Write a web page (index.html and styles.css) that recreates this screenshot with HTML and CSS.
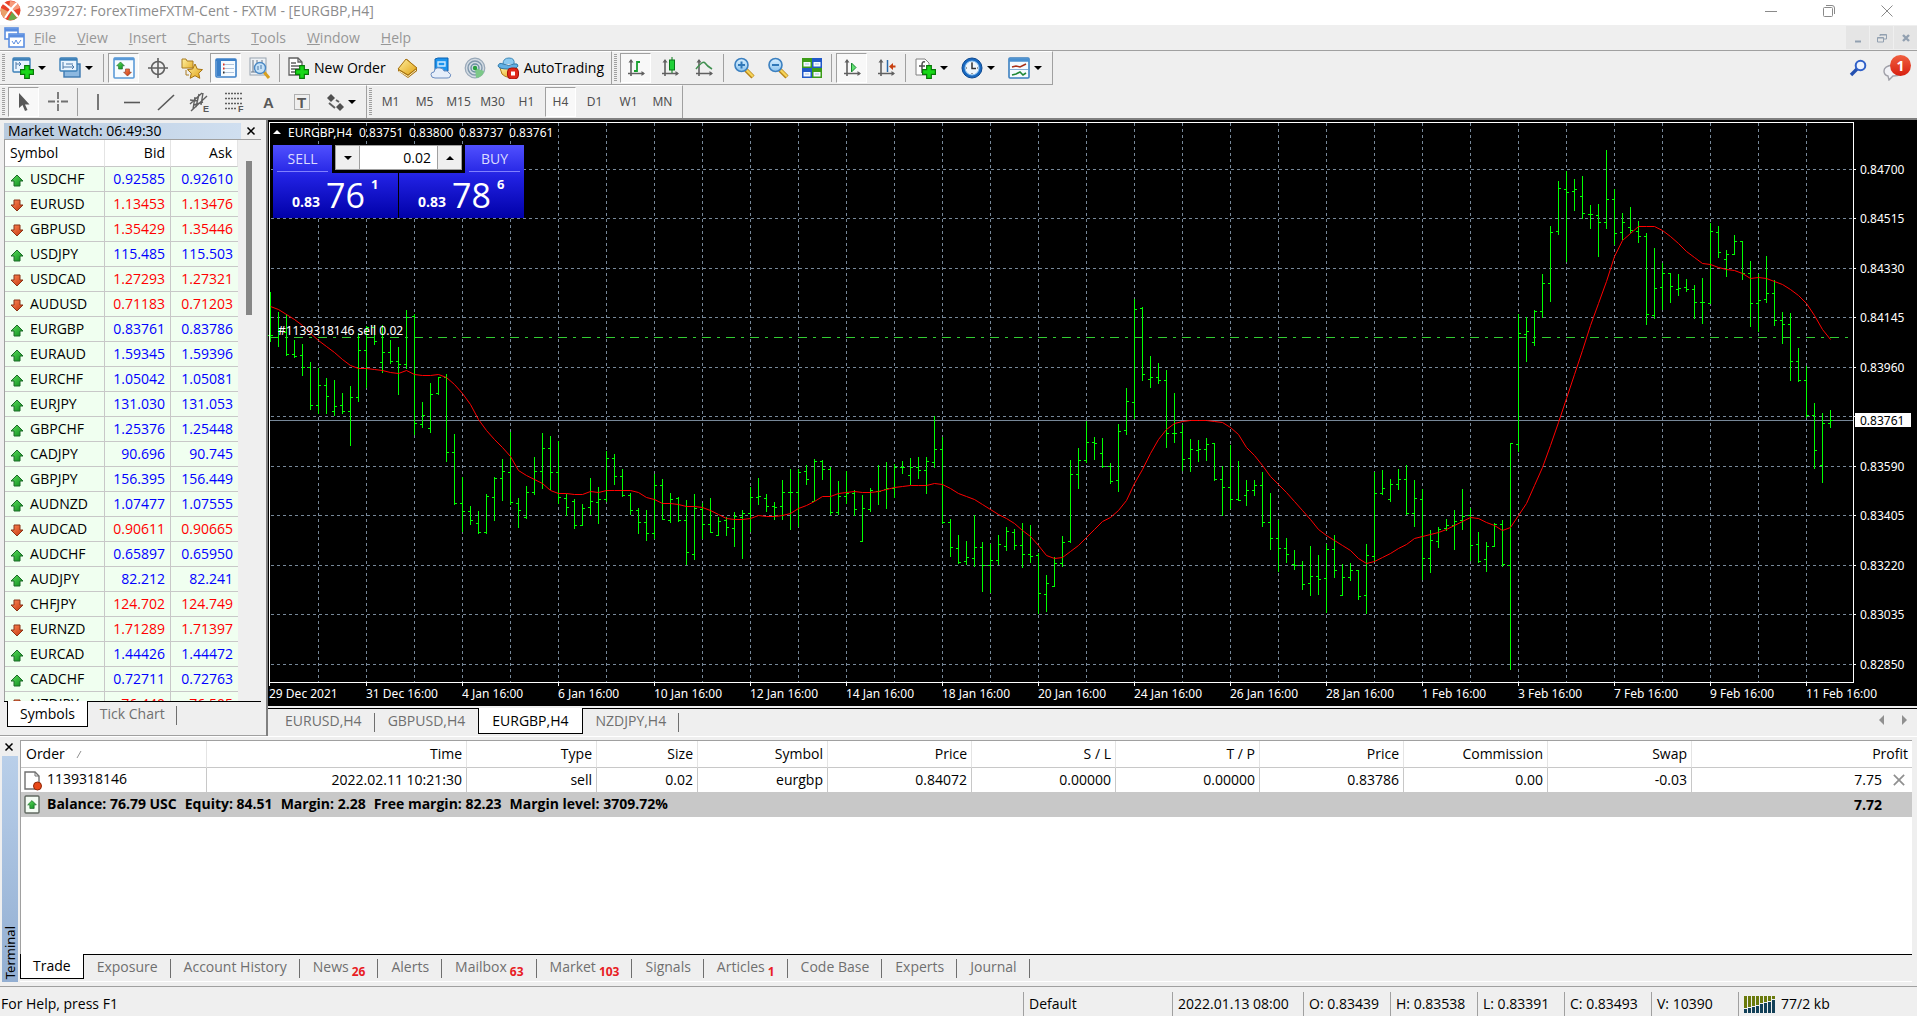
FILE: index.html
```html
<!DOCTYPE html>
<html lang="en">
<head>
<meta charset="utf-8">
<title>2939727: ForexTimeFXTM-Cent - FXTM - [EURGBP,H4]</title>
<link rel="stylesheet" href="styles.css">
</head>
<body>
<svg class="defs" aria-hidden="true">
  <defs>
    <linearGradient id="gGreen" x1="0" y1="0" x2="1" y2="1"><stop offset="0" stop-color="#5fe05f"/><stop offset="1" stop-color="#0a8a1a"/></linearGradient>
    <linearGradient id="gRed" x1="0" y1="0" x2="1" y2="1"><stop offset="0" stop-color="#ff8a5a"/><stop offset="1" stop-color="#c23208"/></linearGradient>
    <linearGradient id="gGold" x1="0" y1="0" x2="1" y2="1"><stop offset="0" stop-color="#fff0a0"/><stop offset="1" stop-color="#e0a010"/></linearGradient>
    <linearGradient id="gBlue" x1="0" y1="0" x2="0" y2="1"><stop offset="0" stop-color="#d8efff"/><stop offset="1" stop-color="#8cc4ee"/></linearGradient>
    <symbol id="up" viewBox="0 0 14 13"><path d="M7 1 13 7H10V12H4V7H1Z" fill="url(#gGreen)" stroke="#1c6a28"/></symbol>
    <symbol id="down" viewBox="0 0 14 13"><path d="M7 12 1 6H4V1H10V6H13Z" fill="url(#gRed)" stroke="#8a3418"/></symbol>
    <symbol id="plus" viewBox="0 0 12 12"><path d="M4 .5H8V4H11.500V8H8V11.500H4V8H.5V4H4Z" fill="#18d818" stroke="#087808"/></symbol>
    <symbol id="axes" viewBox="0 0 18 20"><path d="M4 2V18M1 15.500H17" fill="none" stroke="#606060" stroke-width="1.600"/><path d="M1.500 4.500 4 1 6.500 4.500ZM14.500 13 18 15.500 14.500 18Z" fill="#606060"/></symbol>
    <symbol id="lens" viewBox="0 0 22 22"><path d="M13 13 20 20" stroke="#b88418" stroke-width="4.500"/><path d="M13.500 13 20 19.500" stroke="#f6d45a" stroke-width="2.400"/><circle cx="8.500" cy="8" r="6.500" fill="url(#gBlue)" stroke="#3c80c0" stroke-width="1.600"/></symbol>
  </defs>
</svg>

<header class="titlebar">
  <svg class="logo" viewBox="0 0 21 21"><circle cx="10.500" cy="10.500" r="10" fill="#e8432a"/><path d="M10 1Q18 1 20 8L12 11 9 9Z" fill="#f79a7a"/><path d="M1 8 9 12 4 18Q0 14 1 8Z" fill="#e9a06a"/><path d="M8 20 12 12 17 18Q13 21 8 20Z" fill="#6aa84a"/><path d="M3 3Q9 6 18 17M17 3Q12 7 5 18" fill="none" stroke="#fff" stroke-width="2.200"/></svg>
  <span class="title-text">2939727: ForexTimeFXTM-Cent - FXTM - [EURGBP,H4]</span>
  <div class="window-controls">
    <button type="button" aria-label="Minimize"><svg viewBox="0 0 14 14"><path d="M1 7.500H13"/></svg></button>
    <button type="button" aria-label="Restore"><svg viewBox="0 0 14 14"><rect x="1.500" y="3.500" width="9" height="9" rx="1"/><path d="M4 1.500H10Q12.500 1.500 12.500 4V10"/></svg></button>
    <button type="button" aria-label="Close"><svg viewBox="0 0 14 14"><path d="M1.500 1.500 12.500 12.500M12.500 1.500 1.500 12.500"/></svg></button>
  </div>
</header>

<nav class="menubar">
  <svg class="menu-logo" viewBox="0 0 21 21"><rect x="1" y="1" width="13" height="11" fill="#fff" stroke="#5b8ee0" stroke-width="1.600"/><path d="M1 3H14" stroke="#5b8ee0" stroke-width="3"/><rect x="5" y="7" width="15" height="13" fill="#fff" stroke="#5b8ee0" stroke-width="1.600"/><path d="M5 9H20" stroke="#5b8ee0" stroke-width="3"/><path d="M8 14 10 17 12 13 14 17 17 13" fill="none" stroke="#5b8ee0"/></svg>
  <button type="button"><u>F</u>ile</button>
  <button type="button"><u>V</u>iew</button>
  <button type="button"><u>I</u>nsert</button>
  <button type="button"><u>C</u>harts</button>
  <button type="button"><u>T</u>ools</button>
  <button type="button"><u>W</u>indow</button>
  <button type="button"><u>H</u>elp</button>
  <div class="mdi-controls">
    <button type="button" aria-label="Minimize chart"><svg viewBox="0 0 10 10"><path d="M2 8.500H8" stroke-width="2"/></svg></button>
    <button type="button" aria-label="Restore chart"><svg viewBox="0 0 10 10"><path d="M3 3V1.500H9.500V6H7M.5 4.500H6.500V9H.5ZM.5 5H6.500M3 2H9.500"/></svg></button>
    <button type="button" aria-label="Close chart"><svg viewBox="0 0 10 10"><path d="M2 2 8 8M8 2 2 8" stroke-width="2.400"/></svg></button>
  </div>
</nav>

<div class="toolbars">
  <div class="toolbar-row">
    <div class="toolbar">
      <span class="grip"></span>
      <button type="button" class="tool drop" aria-label="New chart"><svg viewBox="0 0 22 22"><rect x="1" y="1" width="17" height="14" rx="1" fill="#e8f4fe" stroke="#3c80b8" stroke-width="1.400"/><path d="M1 2.500H18" stroke="#3c80b8" stroke-width="2.500"/><path d="M4 5V12M4 7H9M7 5 9 7 7 9" fill="none" stroke="#4a78a8"/><use href="#plus" x="8" y="8" width="14" height="14"/></svg></button>
      <button type="button" class="tool drop" aria-label="Profiles"><svg viewBox="0 0 22 22"><rect x="5" y="7" width="16" height="13" fill="#8cb8e0" stroke="#3c78b0" stroke-width="1.400"/><rect x="1" y="1" width="17" height="13" rx="1" fill="#e8f4fe" stroke="#3c80b8" stroke-width="1.400"/><path d="M1 2.500H18" stroke="#3c80b8" stroke-width="2.500"/><path d="M4 5V12M4 10H15M13 8 15 10 13 12M7 7H14" fill="none" stroke="#4a78a8"/></svg></button>
      <span class="sep"></span>
      <button type="button" class="tool pressed" aria-label="Market Watch"><svg viewBox="0 0 22 22"><rect x="1" y="1" width="20" height="20" rx="1" fill="#f6fbff" stroke="#5a9ad8" stroke-width="1.600"/><path d="M1 2H21" stroke="#5a9ad8" stroke-width="2.500"/><use href="#up" x="3" y="4" width="9" height="9"/><use href="#down" x="10" y="11" width="9" height="9"/></svg></button>
      <button type="button" class="tool" aria-label="Data Window"><svg viewBox="0 0 22 22" fill="none" stroke="#606060" stroke-width="1.600"><circle cx="11" cy="11" r="6.500"/><path d="M11 1V21M1 11H21"/></svg></button>
      <button type="button" class="tool" aria-label="Navigator"><svg viewBox="0 0 22 22"><path d="M1 2H5L6 4H12V11H1ZM5 13V18M5 18H8" fill="url(#gGold)" stroke="#a87a20"/><path d="M14 7 16.300 12 21.500 12.600 17.700 16.200 18.800 21.300 14 18.700 9.200 21.300 10.300 16.200 6.500 12.600 11.700 12Z" fill="url(#gGold)" stroke="#a87410"/></svg></button>
      <button type="button" class="tool pressed" aria-label="Terminal"><svg viewBox="0 0 22 22"><rect x="1" y="2" width="20" height="18" rx="1" fill="#f6fbff" stroke="#3c80c8" stroke-width="1.600"/><path d="M1 3H21" stroke="#3c80c8" stroke-width="2"/><rect x="2" y="4" width="4" height="15" fill="#3c80c8"/><path d="M9 7.500H19M9 11.500H19M9 15.500H19" stroke="#b0c4dc"/><path d="M8 7.500H9.500M8 11.500H9.500" stroke="#e03020" stroke-width="2"/><path d="M8 15.500H9.500" stroke="#303030" stroke-width="2"/></svg></button>
      <button type="button" class="tool" aria-label="Strategy Tester"><svg viewBox="0 0 22 22"><rect x="1" y="1" width="16" height="17" fill="#eef2f6" stroke="#98a4b0"/><path d="M4 3V15M8 3V8M13 3V8M2 15H16" stroke="#68788a"/><path d="M15 15 20 21" stroke="#d8a020" stroke-width="3"/><circle cx="11" cy="11" r="5.500" fill="#c6e2f8" stroke="#4a88c4" stroke-width="1.400"/><path d="M9 9V13M12 8V12" stroke="#4a78a8"/></svg></button>
      <span class="sep"></span>
      <button type="button" class="tool label"><svg viewBox="0 0 22 22"><path d="M2 1H11L15 5V18H2Z" fill="#fff" stroke="#606060" stroke-width="1.300"/><path d="M4 6H9M4 9H12M4 12H12M4 15H8M11 1V5H15" fill="none" stroke="#606060" stroke-width="1.300"/><use href="#plus" x="8" y="8" width="14" height="14"/></svg>New Order</button>
      <button type="button" class="tool" aria-label="MetaEditor"><svg viewBox="0 0 22 22"><path d="M2 12 11 2 21 11V14L12 21 2 14Z" fill="#a87010"/><path d="M2 12 10 2 21 11 12 18Z" fill="url(#gGold)" stroke="#a87410"/><path d="M3 14 12 19.500 20 13" fill="none" stroke="#fff4c0"/></svg></button>
      <button type="button" class="tool" aria-label="Signals service"><svg viewBox="0 0 22 22"><path d="M5 2 8 1H18V14H5Z" fill="#1c94ee" stroke="#0a60b0"/><path d="M8 5H15V9H8Z" fill="none" stroke="#cfeaff" stroke-width="1.400"/><path d="M5 21Q1 21 1 17.500 1 15 4 15 5 10 10 11 13 11 14 14 18 13 19 16 22 17 20 20 19 21 17 21Z" fill="#e6eefa" stroke="#6a8cc0"/></svg></button>
      <button type="button" class="tool" aria-label="Options"><svg viewBox="0 0 22 22" fill="none"><circle cx="11" cy="11" r="9.800" fill="#d4dce4" stroke="#98a8b8" stroke-width="1.200"/><circle cx="11" cy="11" r="7" stroke="#8098ac" stroke-width="1.400"/><circle cx="11" cy="11" r="4" stroke="#6a90a0" stroke-width="1.400"/><path d="M11 11 12 21Q19 20 20 14Z" fill="#7cc888"/><circle cx="11" cy="11" r="2.200" fill="#28a040"/></svg></button>
      <button type="button" class="tool label"><svg viewBox="0 0 22 22"><path d="M3 11H20L18 18Q11 23 5 17Z" fill="url(#gGold)" stroke="#b07a18"/><path d="M6 7Q6 1 12 1T17 7" fill="#8ccaf0" stroke="#3c88b8"/><path d="M1 9Q2 5 6 7 12 10 17 7 21 6 21 9 20 12 11 12 2 12 1 9Z" fill="#60b0e4" stroke="#3078a8"/><rect x="10.500" y="11" width="11" height="11" rx="4" fill="#e02818" stroke="#a81008"/><rect x="14" y="14.500" width="4" height="4" fill="#fff"/></svg>AutoTrading</button>
    </div>
    <div class="toolbar">
      <span class="grip"></span>
      <button type="button" class="tool pressed" aria-label="Bar chart"><svg viewBox="0 0 22 22"><use href="#axes" x="2" y="1" width="18" height="20"/><path d="M12 4V15M12 5H15M9 14H12" fill="none" stroke="#18a030" stroke-width="1.800"/></svg></button>
      <button type="button" class="tool" aria-label="Candlesticks"><svg viewBox="0 0 22 22"><use href="#axes" x="2" y="1" width="18" height="20"/><path d="M13 0V16" stroke="#087818"/><rect x="10.500" y="3" width="5" height="10" fill="#20d038" stroke="#087818"/></svg></button>
      <button type="button" class="tool" aria-label="Line chart"><svg viewBox="0 0 22 22"><use href="#axes" x="2" y="1" width="18" height="20"/><path d="M3 12Q10 3 12 6T19 12" fill="none" stroke="#409050" stroke-width="1.500"/></svg></button>
      <span class="sep"></span>
      <button type="button" class="tool" aria-label="Zoom in"><svg viewBox="0 0 22 22"><use href="#lens" width="22" height="22"/><path d="M5 8H12M8.500 4.500V11.500" stroke="#3078b8" stroke-width="2"/></svg></button>
      <button type="button" class="tool" aria-label="Zoom out"><svg viewBox="0 0 22 22"><use href="#lens" width="22" height="22"/><path d="M5 8H12" stroke="#3078b8" stroke-width="2"/></svg></button>
      <button type="button" class="tool" aria-label="Tile windows"><svg viewBox="0 0 22 22"><path d="M1 1H11V11H1ZM11 11H21V21H11Z" fill="#3c9c18"/><path d="M11 1H21V11H11ZM1 11H11V21H1Z" fill="#2058c8"/><path d="M2.500 5H9.500V9.500H2.500ZM12.500 5H19.500V9.500H12.500ZM2.500 15H9.500V19.500H2.500ZM12.500 15H19.500V19.500H12.500Z" fill="#f4f8ff"/><path d="M4 7H8M14 7H18M4 17H8M14 17H18" stroke="#a8c4e0"/></svg></button>
      <span class="sep"></span>
      <button type="button" class="tool pressed" aria-label="Auto scroll"><svg viewBox="0 0 22 22"><use href="#axes" x="2" y="1" width="18" height="20"/><path d="M10.500 6 15 10.500 10.500 15Z" fill="#60e070" stroke="#188830"/></svg></button>
      <button type="button" class="tool" aria-label="Chart shift"><svg viewBox="0 0 22 22"><use href="#axes" x="2" y="1" width="18" height="20"/><path d="M12.500 3V15" stroke="#2868a8" stroke-width="1.500"/><path d="M14 9.500 18 6V8.500H20.500V10.500H18V13Z" fill="#c84010"/></svg></button>
      <span class="sep"></span>
      <button type="button" class="tool drop" aria-label="Indicators"><svg viewBox="0 0 22 22"><path d="M2 2H11L15 6V18H2Z" fill="#fff" stroke="#808080"/><path d="M11 5Q8 4 8 8V16M5 9H11" fill="none" stroke="#505050" stroke-width="1.500"/><use href="#plus" x="8" y="8" width="14" height="14"/></svg></button>
      <button type="button" class="tool drop" aria-label="Periods"><svg viewBox="0 0 22 22"><circle cx="11" cy="11" r="10" fill="#1868c0" stroke="#0c4890"/><circle cx="11" cy="11" r="7" fill="#eef5fb" stroke="#88c0f0"/><path d="M11 6V11.500H15" fill="none" stroke="#303030" stroke-width="1.500"/><path d="M11 5V6M11 16V17M5 11H6M16 11H17" stroke="#404040"/></svg></button>
      <button type="button" class="tool drop" aria-label="Templates"><svg viewBox="0 0 22 22"><rect x="1" y="1" width="20" height="20" rx="1" fill="#f6fbff" stroke="#3c80c0" stroke-width="1.600"/><path d="M1 3H21" stroke="#4a90d0" stroke-width="3.500"/><path d="M4 10 8 9 12 10 18 7" fill="none" stroke="#a83018" stroke-width="1.600"/><path d="M2 12.500H20" stroke="#88b0d8"/><path d="M4 18 8 17 12 15 15 18 18 16" fill="none" stroke="#208838" stroke-width="1.600"/></svg></button>
    </div>
    <div class="status-tools">
      <button type="button" aria-label="Search"><svg class="search" viewBox="0 0 18 18"><path d="M8 10 2 16" stroke="#2450b0" stroke-width="3.400"/><circle cx="11.500" cy="6.500" r="4.800" fill="#eef4ff" stroke="#3060c8" stroke-width="2"/></svg></button>
      <button type="button" class="chat" aria-label="Messages"><svg viewBox="0 0 22 18"><path d="M10 2Q1 3 1 8 1 12 5 13L6 17 10 13Q20 13 20 8 19 2 10 2Z" fill="#f2f2f6" stroke="#a0a0a8" stroke-width="1.400"/></svg><span class="badge">1</span></button>
    </div>
  </div>
  <div class="toolbar-row">
    <div class="toolbar">
      <span class="grip"></span>
      <button type="button" class="tool pressed" aria-label="Cursor"><svg viewBox="0 0 22 22"><path d="M6 2V17L9.500 14 12 20 14.500 19 12 13.500H16.500Z" fill="#585858"/></svg></button>
      <button type="button" class="tool" aria-label="Crosshair"><svg viewBox="0 0 22 22"><path d="M11 1V8M11 13V20M1 10.500H8M14 10.500H21M10 10.500H12" stroke="#707070" stroke-width="1.800"/></svg></button>
      <span class="sep"></span>
      <button type="button" class="tool" aria-label="Vertical line"><svg viewBox="0 0 22 22"><path d="M11 3V19" stroke="#585858" stroke-width="1.600"/></svg></button>
      <button type="button" class="tool" aria-label="Horizontal line"><svg viewBox="0 0 22 22"><path d="M3 11.500H19" stroke="#585858" stroke-width="1.600"/></svg></button>
      <button type="button" class="tool" aria-label="Trendline"><svg viewBox="0 0 22 22"><path d="M3 19 19 4" stroke="#585858" stroke-width="1.600"/></svg></button>
      <button type="button" class="tool" aria-label="Equidistant channel"><svg viewBox="0 0 22 22"><path d="M1 13 13 2M2 20 18 5M6 6 4 18M10 3 7 16M14 2 12 14M1 9 9 10M5 14 14 11" fill="none" stroke="#606060" stroke-width="1.400"/><text x="14" y="21" class="glyph small">E</text></svg></button>
      <button type="button" class="tool" aria-label="Fibonacci"><svg viewBox="0 0 22 22"><path d="M2 2.500H20M2 7.500H20M2 12.500H20M2 17.500H14" stroke="#606060" stroke-width="1.500" stroke-dasharray="2 1"/><text x="15" y="21" class="glyph small">F</text></svg></button>
      <button type="button" class="tool" aria-label="Text"><svg viewBox="0 0 22 22"><text x="6" y="17" class="glyph">A</text></svg></button>
      <button type="button" class="tool" aria-label="Text label"><svg viewBox="0 0 22 22"><rect x="3.500" y="3.500" width="15" height="15" fill="none" stroke="#707070" stroke-dasharray="1 1"/><text x="6" y="17" class="glyph">T</text></svg></button>
      <button type="button" class="tool drop arrows" aria-label="Arrows"><svg viewBox="0 0 22 22"><path d="M7 3 11 7 7 11 3 7ZM16 12 20 16 16 20 12 16Z" fill="#505050"/><path d="M5 12 11 17M12 9 15 11" stroke="#606060" stroke-width="2"/></svg></button>
    </div>
    <div class="toolbar periods">
      <span class="grip"></span>
      <button type="button" class="tool">M1</button>
      <button type="button" class="tool">M5</button>
      <button type="button" class="tool">M15</button>
      <button type="button" class="tool">M30</button>
      <button type="button" class="tool">H1</button>
      <button type="button" class="tool pressed">H4</button>
      <button type="button" class="tool">D1</button>
      <button type="button" class="tool">W1</button>
      <button type="button" class="tool">MN</button>
    </div>
  </div>
</div>

<main class="workspace">
  <section class="market-watch">
    <div class="panel-title"><span class="panel-name">Market Watch: 06:49:30</span><button type="button" class="close" aria-label="Close Market Watch"><svg viewBox="0 0 10 10"><path d="M1.500 1.500 8.500 8.500M8.500 1.500 1.500 8.500"/></svg></button></div>
    <div class="quotes">
      <table>
        <thead><tr><th>Symbol</th><th>Bid</th><th>Ask</th></tr></thead>
        <tbody>
          <tr class="rise"><td><svg><use href="#up"/></svg>USDCHF</td><td>0.92585</td><td>0.92610</td></tr>
          <tr class="fall"><td><svg><use href="#down"/></svg>EURUSD</td><td>1.13453</td><td>1.13476</td></tr>
          <tr class="fall"><td><svg><use href="#down"/></svg>GBPUSD</td><td>1.35429</td><td>1.35446</td></tr>
          <tr class="rise"><td><svg><use href="#up"/></svg>USDJPY</td><td>115.485</td><td>115.503</td></tr>
          <tr class="fall"><td><svg><use href="#down"/></svg>USDCAD</td><td>1.27293</td><td>1.27321</td></tr>
          <tr class="fall"><td><svg><use href="#down"/></svg>AUDUSD</td><td>0.71183</td><td>0.71203</td></tr>
          <tr class="rise"><td><svg><use href="#up"/></svg>EURGBP</td><td>0.83761</td><td>0.83786</td></tr>
          <tr class="rise"><td><svg><use href="#up"/></svg>EURAUD</td><td>1.59345</td><td>1.59396</td></tr>
          <tr class="rise"><td><svg><use href="#up"/></svg>EURCHF</td><td>1.05042</td><td>1.05081</td></tr>
          <tr class="rise"><td><svg><use href="#up"/></svg>EURJPY</td><td>131.030</td><td>131.053</td></tr>
          <tr class="rise"><td><svg><use href="#up"/></svg>GBPCHF</td><td>1.25376</td><td>1.25448</td></tr>
          <tr class="rise"><td><svg><use href="#up"/></svg>CADJPY</td><td>90.696</td><td>90.745</td></tr>
          <tr class="rise"><td><svg><use href="#up"/></svg>GBPJPY</td><td>156.395</td><td>156.449</td></tr>
          <tr class="rise"><td><svg><use href="#up"/></svg>AUDNZD</td><td>1.07477</td><td>1.07555</td></tr>
          <tr class="fall"><td><svg><use href="#down"/></svg>AUDCAD</td><td>0.90611</td><td>0.90665</td></tr>
          <tr class="rise"><td><svg><use href="#up"/></svg>AUDCHF</td><td>0.65897</td><td>0.65950</td></tr>
          <tr class="rise"><td><svg><use href="#up"/></svg>AUDJPY</td><td>82.212</td><td>82.241</td></tr>
          <tr class="fall"><td><svg><use href="#down"/></svg>CHFJPY</td><td>124.702</td><td>124.749</td></tr>
          <tr class="fall"><td><svg><use href="#down"/></svg>EURNZD</td><td>1.71289</td><td>1.71397</td></tr>
          <tr class="rise"><td><svg><use href="#up"/></svg>EURCAD</td><td>1.44426</td><td>1.44472</td></tr>
          <tr class="rise"><td><svg><use href="#up"/></svg>CADCHF</td><td>0.72711</td><td>0.72763</td></tr>
          <tr class="fall"><td><svg><use href="#down"/></svg>NZDJPY</td><td>76.440</td><td>76.505</td></tr>
        </tbody>
      </table>
      <div class="scrollbar"><div class="thumb"></div></div>
    </div>
    <div class="tabs"><button type="button" class="tab active">Symbols</button><button type="button" class="tab">Tick Chart</button></div>
  </section>

  <section class="chart-window">
    <div class="chart" id="chart">
      <svg id="plot" role="img" aria-label="EURGBP H4 bar chart"></svg>
      <div class="trade-panel">
        <button type="button" class="sell"><span class="side">SELL</span><span class="quote"><b>0.83</b><span class="big">76</span><sup>1</sup></span></button>
        <button type="button" class="buy"><span class="side">BUY</span><span class="quote"><b>0.83</b><span class="big">78</span><sup>6</sup></span></button>
        <div class="volume">
          <button type="button" aria-label="Decrease volume"><svg viewBox="0 0 8 4"><path d="M0 0H8L4 4Z"/></svg></button>
          <input type="text" value="0.02" aria-label="Volume">
          <button type="button" aria-label="Increase volume"><svg viewBox="0 0 8 4"><path d="M0 4H8L4 0Z"/></svg></button>
        </div>
      </div>
    </div>
    <div class="tabs chart-tabs">
      <button type="button" class="tab">EURUSD,H4</button><button type="button" class="tab before">GBPUSD,H4</button><button type="button" class="tab active">EURGBP,H4</button><button type="button" class="tab">NZDJPY,H4</button>
      <div class="tab-scroll"><button type="button" aria-label="Previous tabs"><svg viewBox="0 0 5 10"><path d="M5 0V10L0 5Z"/></svg></button><button type="button" aria-label="Next tabs"><svg viewBox="0 0 5 10"><path d="M0 0V10L5 5Z"/></svg></button></div>
    </div>
  </section>
</main>

<section class="terminal">
  <div class="terminal-side"><button type="button" class="close" aria-label="Close Terminal"><svg viewBox="0 0 10 10"><path d="M1.500 1.500 8.500 8.500M8.500 1.500 1.500 8.500"/></svg></button><div class="side-title"><span>Terminal</span></div></div>
  <div class="terminal-main">
    <div class="orders">
      <table>
        <colgroup><col class="c-order"><col class="c-time"><col class="c-type"><col class="c-size"><col class="c-type"><col class="c-num"><col class="c-num"><col class="c-num"><col class="c-num"><col class="c-num"><col class="c-num"><col></colgroup>
        <thead><tr><th>Order<svg class="sort" viewBox="0 0 6 9"><path d="M1 8 5 1" /></svg></th><th>Time</th><th>Type</th><th>Size</th><th>Symbol</th><th>Price</th><th>S / L</th><th>T / P</th><th>Price</th><th>Commission</th><th>Swap</th><th>Profit</th></tr></thead>
        <tbody>
          <tr><td><svg class="row-icon" viewBox="0 0 18 20"><path d="M1 1H11L15 5V18H1Z" fill="#fff" stroke="#707070" stroke-width="1.400"/><path d="M11 1V5H15" fill="none" stroke="#707070"/><circle cx="13.500" cy="15" r="4" fill="#e84818" stroke="#902808"/></svg>1139318146</td><td>2022.02.11 10:21:30</td><td>sell</td><td>0.02</td><td>eurgbp</td><td>0.84072</td><td>0.00000</td><td>0.00000</td><td>0.83786</td><td>0.00</td><td>-0.03</td><td class="profit">7.75<button type="button" aria-label="Close order"><svg viewBox="0 0 14 12"><path d="M1 0 13 12M13 0 1 12"/></svg></button></td></tr>
          <tr class="balance"><td colspan="11"><svg class="row-icon" viewBox="0 0 18 20"><rect x="1" y="1" width="14" height="17" rx="1" fill="#f4fcf4" stroke="#606860" stroke-width="1.400"/><use href="#up" x="3" y="4" width="10" height="11"/></svg><span>Balance: 76.79 USC</span><span>Equity: 84.51</span><span>Margin: 2.28</span><span>Free margin: 82.23</span><span>Margin level: 3709.72%</span></td><td class="total">7.72</td></tr>
        </tbody>
      </table>
    </div>
    <div class="tabs terminal-tabs">
      <button type="button" class="tab active">Trade</button><button type="button" class="tab">Exposure</button><button type="button" class="tab">Account History</button><button type="button" class="tab">News<b>26</b></button><button type="button" class="tab">Alerts</button><button type="button" class="tab">Mailbox<b>63</b></button><button type="button" class="tab">Market<b>103</b></button><button type="button" class="tab">Signals</button><button type="button" class="tab">Articles<b>1</b></button><button type="button" class="tab">Code Base</button><button type="button" class="tab">Experts</button><button type="button" class="tab">Journal</button>
    </div>
  </div>
</section>

<footer class="statusbar">
  <span class="help">For Help, press F1</span>
  <span class="cell profile">Default</span><span class="cell date">2022.01.13 08:00</span><span class="cell">O: 0.83439</span><span class="cell">H: 0.83538</span><span class="cell">L: 0.83391</span><span class="cell">C: 0.83493</span><span class="cell">V: 10390</span>
  <span class="cell link"><svg viewBox="0 0 32 17"><path d="M0 0H3V12H0ZM4 0H7V11H4ZM8 0H11V10H8ZM12 0H15V9H12ZM16 0H19V7H16ZM20 0H23V6H20ZM24 0H27V5H24ZM28 0H31V3H28Z" fill="#6a7a0c"/><path d="M0 13H3V17H0ZM4 12H7V17H4ZM8 11H11V17H8ZM12 10H15V17H12ZM16 8H19V17H16ZM20 7H23V17H20ZM24 6H27V17H24ZM28 4H31V17H28Z" fill="#124058"/></svg>77/2 kb</span>
</footer>
<script src="chart.js"></script>
</body>
</html>
```
FILE: styles.css
```css
* { box-sizing: border-box; }
body {
  margin: 0;
  height: 100vh;
  display: flex;
  flex-direction: column;
  overflow: hidden;
  background: #efefef;
  color: #000;
  font: 14px/18px "Open Sans", "Noto Sans", sans-serif;
}
button, input { font: inherit; color: inherit; border: 0; padding: 0; margin: 0; background: none; }
svg { display: block; flex: none; }
.defs { position: absolute; width: 0; height: 0; }

/* Title and menu */
.titlebar { display: flex; align-items: center; height: 25px; padding-bottom: 4px; background: #fff; color: #8c8c8c; }
.logo { width: 21px; height: 21px; }
.title-text { margin-left: 6px; }
.window-controls { margin-left: auto; display: flex; padding-right: 1px; }
.window-controls button { width: 58px; display: grid; place-items: center; }
.window-controls svg { width: 14px; height: 14px; fill: none; stroke: #8a8a8a; }
.menubar { display: flex; align-items: center; height: 25px; gap: 21px; color: #979797; }
.menu-logo { width: 21px; height: 21px; margin: 0 -12px 0 4px; }
.mdi-controls { margin-left: auto; display: flex; gap: 1px; height: 23px; }
.mdi-controls button { width: 23px; display: grid; place-items: center; background: #e5e5e5; }
.mdi-controls svg { width: 10px; height: 10px; fill: none; stroke: #92a0b0; }

/* Toolbars */
.toolbars { border-top: 1px solid #a0a0a0; border-bottom: 2px solid #808080; }
.toolbar-row { display: flex; height: 34px; }
.toolbar-row + .toolbar-row { height: 33px; }
.toolbar {
  display: flex;
  align-items: center;
  gap: 3px;
  padding-right: 4px;
  border-right: 1px solid #a0a0a0;
  border-top: 1px solid #fff;
  border-bottom: 1px solid #a0a0a0;
}
.toolbar-row + .toolbar-row .toolbar { border-bottom: 0; }
.grip { width: 3px; height: 28px; margin: 0 0 0 2px; background: repeating-linear-gradient(#a0a0a0 0 1px, #efefef 1px 2px); }
.sep { width: 1px; height: 28px; margin: 0 1px; background: #a0a0a0; }
.tool { width: 31px; height: 30px; display: flex; align-items: center; justify-content: center; border: 1px solid transparent; }
.tool svg { width: 22px; height: 22px; }
.tool.pressed { background: #f8f8f8; border-color: #a0a0a0 #fff #fff #a0a0a0; }
.tool.drop { width: 44px; justify-content: space-between; padding: 0 5px 0 3px; }
.tool.drop::after { content: ""; border: 4px solid transparent; border-top-color: #000; border-bottom: 0; }
.tool.drop.arrows { width: 42px; }
.tool.label { width: auto; gap: 5px; padding: 0 2px; }
.glyph { font: bold 15px "Liberation Sans", sans-serif; fill: #585858; }
.glyph.small { font-size: 9px; }
.periods .tool { font-size: 12px; color: #505050; font-family: "Noto Sans", sans-serif; }
.status-tools { margin-left: auto; display: flex; align-items: center; gap: 16px; padding-right: 6px; }
.search { width: 18px; height: 18px; }
.chat { display: grid; width: 28px; height: 26px; align-items: end; }
.chat > * { grid-area: 1 / 1; }
.chat svg { width: 22px; height: 18px; }
.badge { justify-self: end; align-self: start; width: 21px; height: 21px; border-radius: 50%; background: linear-gradient(#f06040, #d82010); color: #fff; font: bold 14px/21px "Open Sans", sans-serif; text-align: center; }

/* Workspace */
.workspace { flex: 1; min-height: 0; display: flex; }
.market-watch { width: 266px; display: flex; flex-direction: column; padding: 3px 5px 8px 4px; border-bottom: 1px solid #a0a0a0; }
.panel-title { display: flex; align-items: center; height: 16px; }
.panel-name { width: 237px; padding-left: 4px; line-height: 16px; background: linear-gradient(90deg, #b8cade, #d0dff0); }
.close { width: 20px; display: grid; place-items: center; }
.close svg { width: 10px; height: 10px; stroke: #000; stroke-width: 1.5; fill: none; }
.quotes { flex: 1; min-height: 0; display: flex; align-items: flex-start; overflow: hidden; border-left: 1px solid #a0a0a0; border-top: 1px solid #a0a0a0; }
table { border-collapse: separate; border-spacing: 0; table-layout: fixed; }
th { font-weight: normal; text-align: right; }
th:first-child, td:first-child { text-align: left; }
td { text-align: right; }
.quotes table { width: 233px; flex: none; }
.quotes th, .quotes td { padding: 0 5px 0 0; border-right: 1px solid #c8c8c8; border-bottom: 1px solid #c8c8c8; }
.quotes th { height: 27px; background: #fff; border-right-color: #e4e4e4; }
.quotes td { height: 25px; background: #f0fff0; color: #0000ff; }
.quotes .fall td { color: #ff0000; }
.quotes tr td:last-child { border-right: 0; }
.quotes tr > :nth-child(1) { width: 100px; padding-left: 5px; }
.quotes tr > :nth-child(2) { width: 66px; }
.quotes tbody tr td:first-child { color: #000; }
.quotes td svg { display: inline-block; width: 14px; height: 13px; margin-right: 6px; vertical-align: -3px; }
.scrollbar { padding: 21px 0 0 8px; }
.thumb { width: 6px; height: 154px; background: #868686; }

.tabs { display: flex; flex: none; height: 26px; color: #6f6f6f; border-top: 1px solid #000; }
.tab { position: relative; display: flex; align-items: center; padding: 0 13px; height: 24px; }
.tab::after { content: ""; position: absolute; right: 0; top: 4px; width: 1px; height: 19px; background: #6f6f6f; }
.tab.active { margin-top: -1px; height: 26px; background: #fff; color: #000; border: 1px solid #000; border-top: 0; }
.tab.active::after, .tab.before::after { display: none; }
.tab b { margin-left: 3px; padding-top: 8px; font: bold 12px/17px "Noto Sans", sans-serif; color: #e81c24; }
.market-watch .tabs { padding-left: 3px; }
.market-watch .tab { padding: 0 12px; }

.chart-window { flex: 1; min-width: 0; display: flex; flex-direction: column; border-left: 2px solid #808080; }
.chart { position: relative; flex: 1; min-height: 0; background: #000; }
#plot { position: absolute; inset: 0; width: 100%; height: 100%; }
#plot text { font: 12px "Noto Sans", sans-serif; fill: #fff; }
#plot .now { fill: #000; }
.grid { stroke: #778899; stroke-dasharray: 3 3; fill: none; shape-rendering: crispEdges; }
.last { stroke: #778899; shape-rendering: crispEdges; }
.order-line { stroke: #32cd32; stroke-dasharray: 9 6 3 6; shape-rendering: crispEdges; }
.bars { stroke: #00ff00; fill: none; shape-rendering: crispEdges; }
.average { stroke: #ff0000; fill: none; }
.frame { stroke: #fff; fill: none; shape-rendering: crispEdges; }

.trade-panel { position: absolute; left: 5px; top: 25px; display: grid; grid-template-columns: 125px 125px; gap: 1px; color: #fff; background: #000; }
.trade-panel > * { grid-row: 1; }
.sell, .buy { display: flex; flex-direction: column; height: 73px; background: linear-gradient(#5050ff, #2020e0 45%, #0000a8); }
.sell { grid-column: 1; clip-path: polygon(0 0, 59px 0, 59px 28px, 125px 28px, 125px 73px, 0 73px); }
.buy { grid-column: 2; align-items: flex-end; clip-path: polygon(66px 0, 125px 0, 125px 73px, 0 73px, 0 28px, 66px 28px); }
.side { width: 51px; height: 27px; margin: 0 4px; line-height: 27px; text-align: center; border-bottom: 1px solid #8080ff; color: #dcdcff; }
.quote { display: flex; align-items: flex-end; width: 125px; height: 42px; padding-left: 19px; gap: 6px; }
.quote b { font-size: 14px; line-height: 24px; }
.big { font-size: 34px; line-height: 38px; }
.quote sup { align-self: flex-start; font: bold 13px/24px "Open Sans", sans-serif; }
.volume { grid-column: 1 / 3; justify-self: center; display: flex; width: 127px; height: 25px; color: #000; border: 1px solid #a0a0a0; background: #fff; }
.volume button { width: 23px; display: grid; place-items: center; background: #efefef; }
.volume svg { width: 8px; height: 4px; }
.volume input { flex: 1; min-width: 0; padding-right: 6px; text-align: right; border: solid #a0a0a0; border-width: 0 1px; }
.chart-tabs { height: 28px; margin-top: 2px; padding: 0 0 2px 4px; }
.tab-scroll { margin-left: auto; display: flex; gap: 18px; padding: 0 10px 4px 0; align-items: center; }
.tab-scroll svg { width: 5px; height: 10px; fill: #909090; }

/* Terminal */
.terminal { display: flex; height: 251px; padding: 3px 5px 4px 0; border-top: 1px solid #fff; border-bottom: 1px solid #a0a0a0; }
.terminal-side { width: 20px; display: flex; flex-direction: column; }
.terminal-side .close { width: 18px; height: 14px; }
.side-title { flex: 1; margin: 2px 2px 0 2px; display: flex; align-items: flex-end; justify-content: center; padding-bottom: 3px; background: linear-gradient(#b9cfe9, #92aed2); }
.side-title span { writing-mode: vertical-rl; rotate: 180deg; font: 13px/16px "Noto Sans", sans-serif; }
.terminal-main { flex: 1; min-width: 0; display: flex; flex-direction: column; }
.orders { flex: 1; background: #fff; border-top: 1px solid #a0a0a0; border-left: 1px solid #a0a0a0; }
.orders table { width: 100%; }
.c-order { width: 186px; }
.c-time { width: 260px; }
.c-type { width: 130px; }
.c-size { width: 101px; }
.c-num { width: 144px; }
.orders th, .orders td { padding: 0 4px 0 5px; border-right: 1px solid #c8c8c8; }
.orders th { height: 27px; border-right-color: #e4e4e4; border-bottom: 1px solid #c8c8c8; }
.orders th:last-child, .orders td:last-child { border-right: 0; }
.orders td { height: 24px; line-height: 20px; }
.orders .balance td { height: 25px; background: #c8c8c8; border: 0; font-weight: 700; }
.balance td span { margin-right: 8px; }
.orders td.profit, .orders .balance .total { padding-right: 30px; position: relative; }
.profit button { position: absolute; right: 7px; top: 6px; }
.profit svg { width: 12px; height: 12px; stroke: #909090; stroke-width: 2; }
.sort { display: inline-block; width: 6px; height: 9px; margin-left: 11px; stroke: #909090; fill: none; }
.orders td:first-child { padding-left: 3px; }
.row-icon { display: inline-block; width: 18px; height: 20px; margin-right: 5px; vertical-align: middle; }
.terminal-tabs { height: 28px; padding: 0 0 2px 0; border-bottom: 1px solid #fff; }
.terminal-tabs .tab { height: 24px; }
.terminal-tabs .tab.active { height: 25px; padding: 0 12px; }

/* Status bar */
.statusbar { display: flex; align-items: center; height: 29px; padding-top: 5px; }
.help { flex: 1; padding-left: 1px; }
.cell { width: 87px; height: 24px; padding-left: 5px; line-height: 24px; border-left: 1px solid #a0a0a0; white-space: nowrap; }
.profile { width: 149px; }
.date { width: 131px; }
.link { width: 179px; display: flex; align-items: center; gap: 5px; }
.link svg { width: 32px; height: 17px; }
```
FILE: chart.js
```js
// Bars as "high low open close", in pixels down from the top of the chart.
const bars = `172 222 215 215,192 227 217 210,194 236 212 234,220 238 234 236,224 256 235 247,242 290 247 285,248 294 285 265,258 294 265 276,260 296 291 286,273 294 285 291,266 326 291 277,213 282 277 230,206 268 230 207,205 225 207 221,205 253 242 232,220 244 232 241,227 275 241 244,190 249 244 197,194 315 196 303,282 308 304 295,263 313 308 274,257 275 273 257,254 342 257 332,314 385 332 383,357 412 383 391,386 405 391 400,391 414 403 412,374 414 412 376,357 401 377 358,339 381 358 351,312 385 352 382,378 408 383 390,366 399 397 372,337 375 372 351,313 369 351 328,316 370 328 352,321 384 352 377,374 396 378 387,379 409 381 405,384 406 405 388,358 395 387 381,367 404 382 379,331 382 379 338,334 365 338 356,349 377 356 375,373 395 375 390,388 414 390 402,390 421 402 413,354 419 413 365,359 400 365 399,373 403 400 379,377 402 378 400,380 445 400 432,374 440 434 388,383 419 389 404,378 413 404 412,397 416 415 401,397 416 400 407,392 427 408 396,390 439 397 393,367 412 393 377,358 385 377 376,374 392 378 386,382 400 386 387,360 400 386 372,349 410 372 372,349 407 372 352,345 365 351 359,339 381 381 341,340 360 341 349,347 395 349 392,361 395 392 376,351 384 376 373,370 396 373 389,375 422 421 388,368 392 389 370,345 385 371 371,342 389 369 368,344 378 368 347,341 354 347 347,338 365 355 347,337 359 347 350,337 374 350 341,296 348 342 329,317 404 329 402,399 437 402 427,415 444 428 442,421 445 441 437,395 447 438 427,422 472 427 445,424 473 445 440,415 445 440 424,407 431 426 411,409 430 412 425,403 448 425 434,405 443 434 436,433 494 435 473,455 492 474 463,437 467 466 443,416 447 443 422,340 423 421 354,328 369 354 340,301 343 340 322,317 340 322 323,318 348 333 346,343 364 346 361,304 372 360 311,268 315 310 281,179 299 282 189,187 261 188 254,236 268 259 257,243 264 257 260,250 328 260 313,273 323 313 313,305 351 312 339,319 352 338 329,320 342 330 329,318 341 329 324,323 361 323 359,346 396 359 367,325 389 367 379,341 381 379 380,360 386 375 370,360 376 370 365,352 407 365 402,373 430 402 418,400 452 418 428,418 443 428 434,430 450 444 445,441 470 445 464,426 476 463 456,435 475 456 459,424 493 458 429,415 458 429 450,444 476 475 457,443 461 457 450,450 480 450 476,424 494 475 435,352 442 436 373,350 375 373 368,359 382 379 364,349 370 364 359,345 395 359 393,360 407 393 378,369 460 379 438,410 453 438 420,407 428 421 409,399 411 408 405,390 430 405 401,369 410 400 396,388 441 395 425,412 443 424 441,422 452 439 426,403 427 426 404,400 447 404 444,323 550 445 323,194 332 324 213,197 242 214 211,190 226 222 191,154 198 191 163,106 182 163 112,61 115 111 68,51 142 69 72,59 91 71 69,56 99 76 93,85 109 94 94,84 137 95 102,30 109 102 79,69 125 79 113,93 120 112 102,87 113 107 110,101 123 111 116,113 205 116 194,128 199 195 168,143 190 167 153,153 183 153 166,154 176 169 168,159 172 167 169,165 199 169 182,158 204 182 182,103 184 183 111,106 138 112 132,130 157 139 134,115 135 134 121,121 160 121 153,141 207 153 183,154 212 183 180,136 183 179 173,160 206 173 200,192 224 200 204,193 261 204 241,228 262 241 260,246 298 260 295,283 349 295 330,293 363 345 303,290 308 303 300`
  .split(',').map(bar => bar.split(' ').map(Number));

// Moving average, one value for each bar.
const average = `186 189 194 199 205 213 220 226 232 239 245 248 248 249 250 252 253 250 254 255 255 254 257 264 273 284 299 310 319 327 336 350 355 359 363 370 373 373 374 374 371 372 370 370 370 370 372 377 379 383 383 384 386 386 387 390 394 398 399 399 398 395 396 396 395 393 388 385 381 376 376 373 372 371 372 372 371 369 367 366 365 365 365 363 364 368 373 376 379 384 389 394 398 403 410 416 425 435 438 437 431 425 417 409 401 397 390 380 363 349 333 319 309 303 301 300 300 300 301 302 307 314 327 335 345 356 364 372 381 390 399 409 415 420 425 430 438 443 441 437 433 428 424 418 416 414 412 409 405 401 397 398 402 405 410 407 395 383 365 347 325 302 278 254 230 205 183 161 136 120 113 106 106 106 110 116 123 131 137 143 144 147 149 150 153 158 157 158 161 164 169 175 183 195 209 219`
  .split(' ').map(Number);

const dates = ['29 Dec 2021', '31 Dec 16:00', '4 Jan 16:00', '6 Jan 16:00', '10 Jan 16:00', '12 Jan 16:00', '14 Jan 16:00', '18 Jan 16:00', '20 Jan 16:00', '24 Jan 16:00', '26 Jan 16:00', '28 Jan 16:00', '1 Feb 16:00', '3 Feb 16:00', '7 Feb 16:00', '9 Feb 16:00', '11 Feb 16:00'];
const prices = ['0.84700', '0.84515', '0.84330', '0.84145', '0.83960', '', '0.83590', '0.83405', '0.83220', '0.83035', '0.82850'];
const ohlc = ['0.83751', '0.83800', '0.83737', '0.83761'];
const gridY = [49, 98, 148, 197, 247, 296, 346, 395, 445, 494, 544];

const step = 8;
const firstX = 2;
const lastY = 300;
const orderY = 217;
const plot = document.getElementById('plot');

function draw() {
  const { width, height } = document.getElementById('chart').getBoundingClientRect();
  const right = Math.round(width) - 64;
  const bottom = Math.round(height) - 24;
  const line = d => `M${d}`;
  let grid = '';
  for (let x = firstX + 6 * step; x < right; x += 6 * step) grid += line(`${x + 0.5} 3V${bottom}`);
  for (const y of gridY) grid += line(`3 ${y + 0.5}H${right}`);

  let barPath = '';
  bars.forEach(([high, low, open, close], i) => {
    const x = firstX + i * step;
    barPath += `M${x + 0.5} ${high}V${low}M${x - 2} ${open + 0.5}h2M${x + 1} ${close + 0.5}h2`;
  });
  const averagePath = 'M' + average.map((y, i) => `${firstX + i * step + 0.5} ${y + 0.5}`).join('L');

  let ticks = '';
  let labels = '';
  dates.forEach((text, i) => {
    const x = i ? firstX + 12 * step * i : 1;
    ticks += line(`${x + 0.5} ${bottom}v4`);
    labels += `<text x="${x}" y="${bottom + 16}">${text}</text>`;
  });
  prices.forEach((text, i) => {
    ticks += line(`${right} ${gridY[i] + 0.5}h3`);
    labels += `<text x="${right + 7}" y="${gridY[i] + 5}">${text}</text>`;
  });
  ohlc.forEach((text, i) => {
    labels += `<text x="${91 + 50 * i}" y="17">${text}</text>`;
  });

  plot.innerHTML = `
    <path class="grid" d="${grid}"/>
    <path class="last" d="M2 ${lastY + 0.5}H${right}"/>
    <path class="order-line" d="M2 ${orderY + 0.5}H${right - 5}"/>
    <path class="bars" d="${barPath}"/>
    <path class="average" d="${averagePath}"/>
    <path class="frame" d="M1.500 ${bottom + 0.5}V2.500H${right + 0.5}V${bottom + 0.5}Z${ticks}"/>
    <path fill="#fff" d="M5 14 9 10 13 14Z"/>
    <text x="20" y="17">EURGBP,H4</text>
    <text x="10" y="215">#1139318146 sell 0.02</text>
    ${labels}
    <rect x="${right + 2}" y="${lastY - 7}" width="56" height="14" fill="#fff"/>
    <text class="now" x="${right + 7}" y="${lastY + 5}">0.83761</text>`;
}

draw();
window.addEventListener('resize', draw);
```
